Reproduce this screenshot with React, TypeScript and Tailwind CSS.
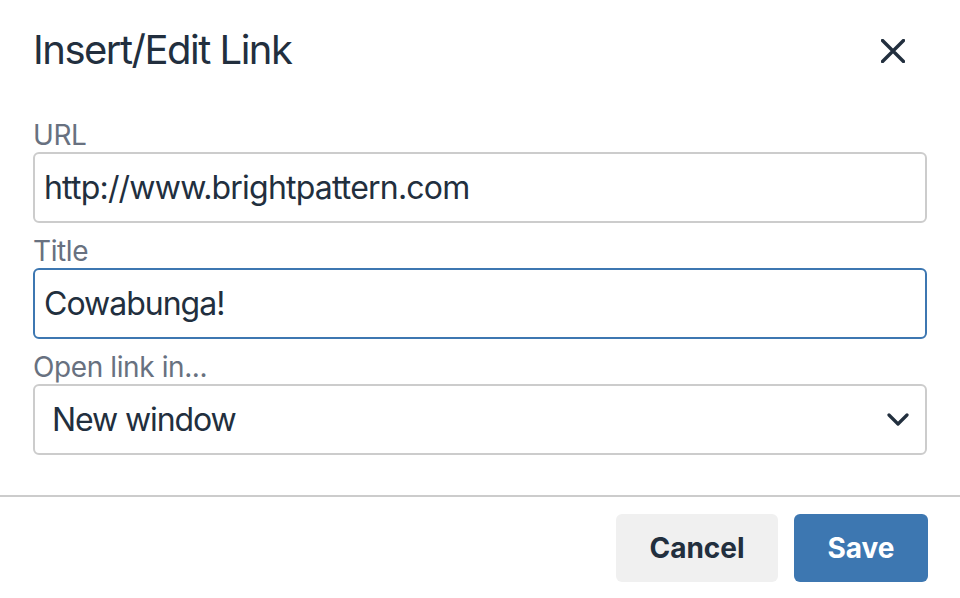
import React from "react";

function Field({ label, children }: { label: string; children: React.ReactNode }) {
  return (
    <div className="flex flex-col">
      <div className="h-[34px] text-[28px] leading-[34px] tracking-[-0.4px] text-[#687180]">{label}</div>
      {children}
    </div>
  );
}

export default function App() {
  return (
    <div
      className="w-[960px] h-[598px] bg-white text-[#222f3e] flex flex-col overflow-hidden"
      style={{ fontFamily: "Inter, 'Noto Sans', sans-serif" }}
    >
      <div className="flex items-center justify-between pl-[33px] pr-[55px] pt-[26px] h-[74px]">
        <h1 className="text-[40px] leading-[48px] font-normal tracking-[-1.5px]">Insert/Edit Link</h1>
        <svg width="24" height="24" viewBox="0 0 24 24" className="mt-[2px]">
          <path d="M1.5 1.5 L22.5 22.5 M22.5 1.5 L1.5 22.5" stroke="#222f3e" strokeWidth="3.4" strokeLinecap="round" fill="none" />
        </svg>
      </div>

      <div className="flex flex-col gap-[11px] px-[33px] pt-[44px] pb-[40px]">
        <Field label="URL">
          <div className="h-[71px] border-2 border-[#cccccc] rounded-[6px] flex items-center pl-[9px] text-[32px] tracking-[-0.8px]">
            http://www.brightpattern.com
          </div>
        </Field>
        <Field label="Title">
          <div className="h-[71px] border-2 border-[#3d77b1] rounded-[6px] flex items-center pl-[9px] text-[32px] tracking-[-1px]">
            Cowabunga!
          </div>
        </Field>
        <Field label="Open link in...">
          <div className="h-[71px] border-2 border-[#cccccc] rounded-[6px] flex items-center justify-between pl-[17px] pr-[16px] text-[32px] tracking-[-1.1px]">
            <span>New window</span>
            <svg width="22" height="13" viewBox="0 0 22 13">
              <path d="M2 2 L11 11 L20 2" stroke="#222f3e" strokeWidth="3.2" strokeLinecap="round" strokeLinejoin="round" fill="none" />
            </svg>
          </div>
        </Field>
      </div>

      <div className="h-[2px] bg-[#cccccc]" />

      <div className="flex justify-end gap-[16px] pt-[17px] pr-[32px]">
        <button className="w-[162px] h-[68px] rounded-[6px] bg-[#f0f0f0] text-[28px] font-bold text-[#222f3e]">
          Cancel
        </button>
        <button className="w-[134px] h-[68px] rounded-[6px] bg-[#3d77b1] text-[28px] font-bold text-white">
          Save
        </button>
      </div>
    </div>
  );
}
